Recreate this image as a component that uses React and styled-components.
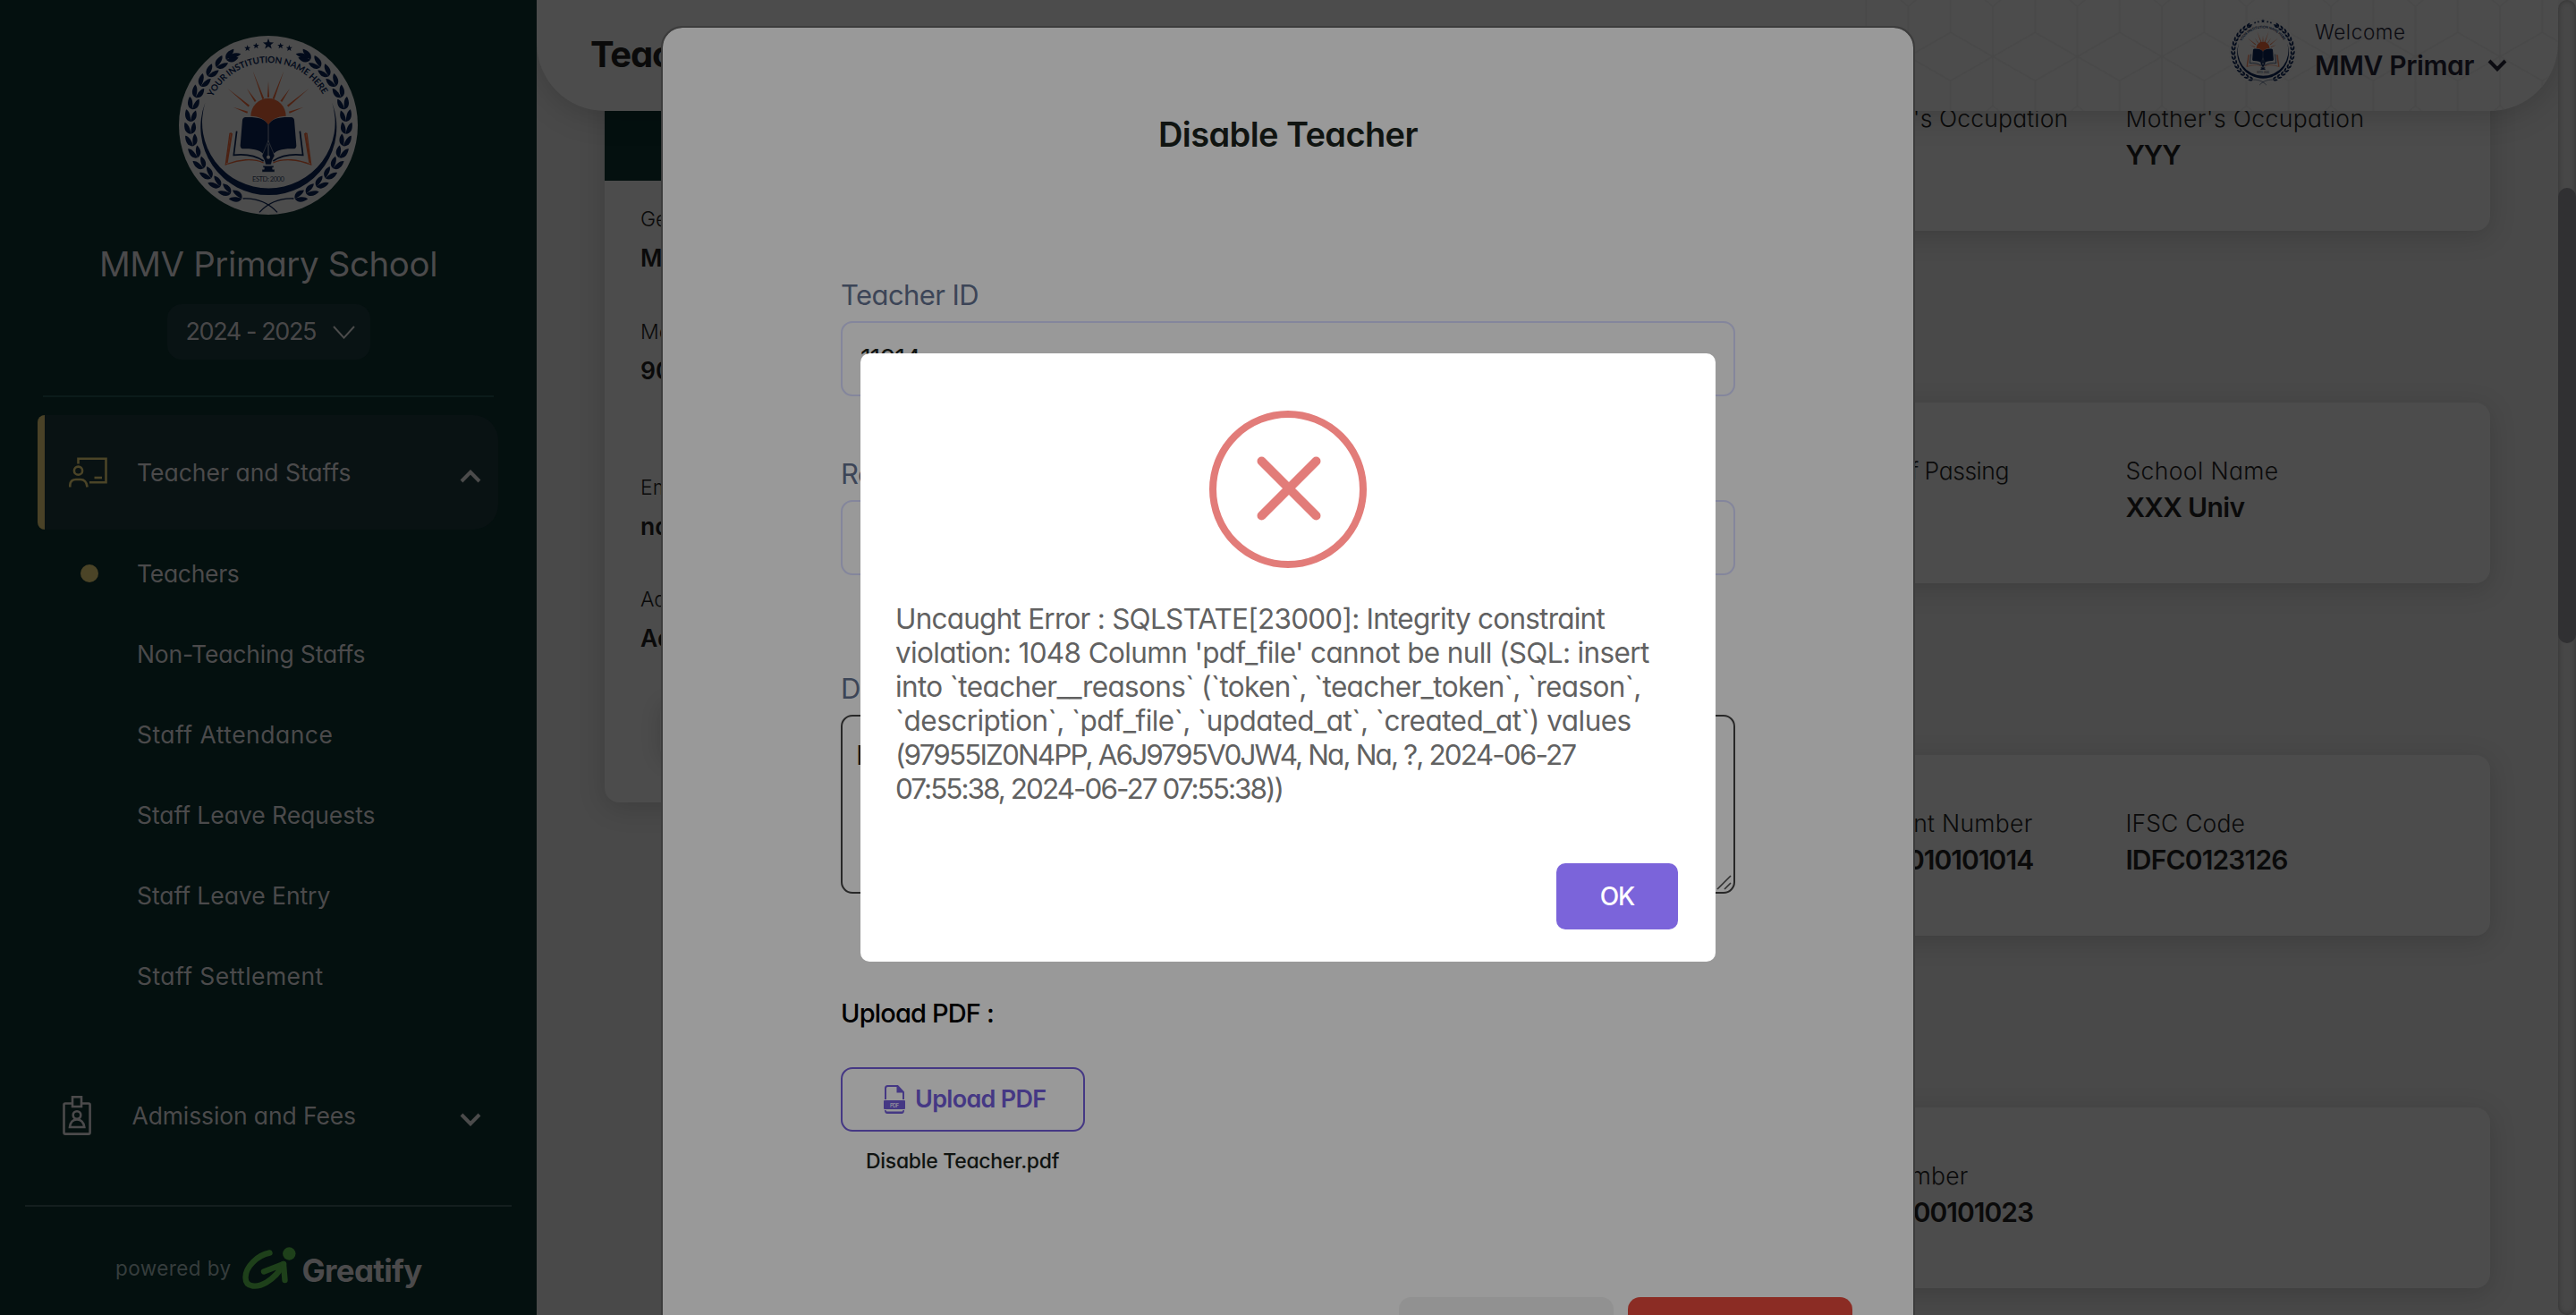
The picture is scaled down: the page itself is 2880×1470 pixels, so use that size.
import React from 'react';
import styled, { createGlobalStyle } from 'styled-components';

const GlobalStyle = createGlobalStyle`
  * { box-sizing: border-box; }
  html, body { margin: 0; padding: 0; background: #4a4a4a; overflow: hidden; }
  body {
    font-family: Inter, "Liberation Sans", sans-serif;
    font-feature-settings: 'cv11';
    color: #0a0a0a;
  }
`;

/* ---------- shell ---------- */

const Page = styled.div`
  position: relative;
  display: flex;
  width: 2880px;
  height: 1470px;
  overflow: hidden;
`;

const Label = styled.span`
  white-space: pre;
  font-size: ${(p) => p.$size}px;
  font-weight: ${(p) => p.$weight || 400};
  letter-spacing: ${(p) => p.$track || 0}px;
  line-height: ${(p) => p.$line || 36}px;
  color: ${(p) => p.$color || 'inherit'};
`;

/* ---------- sidebar ---------- */

const Sidebar = styled.aside`
  display: flex;
  flex-direction: column;
  flex: none;
  width: 600px;
  padding-top: 40px;
  background: #04100f;
  color: #4b4a4b;
`;

const Brand = styled.div`
  display: flex;
  flex-direction: column;
  align-items: center;
  gap: 31px;
`;

const YearSelect = styled.div`
  display: flex;
  align-items: center;
  justify-content: space-between;
  align-self: center;
  width: 227px;
  height: 62px;
  margin-top: 21px;
  padding: 0 17px 0 21px;
  border-radius: 16px;
  background: #091314;
`;

const Divider = styled.div`
  flex: none;
  height: 2px;
  margin: ${(p) => p.$margin};
  background: ${(p) => p.$color};
`;

const MenuItem = styled.div`
  display: flex;
  align-items: center;
  flex: none;
  height: ${(p) => (p.$active ? 128 : 100)}px;
  margin: ${(p) => (p.$active ? '20px 43px 0 42px' : '61px 43px 0 42px')};
  padding: ${(p) => (p.$active ? '0 19px 0 27px' : '0 19px 0 28px')};
  border-left: ${(p) => (p.$active ? '8px solid #4a4227' : '0')};
  border-radius: 8px 28px 28px 8px;
  background: ${(p) => (p.$active ? '#091213' : 'transparent')};
`;

const MenuText = styled(Label)`
  flex: 1;
  margin-left: ${(p) => p.$gap}px;
`;

const MenuCaret = styled.div`
  display: flex;
  padding-top: 9px;
`;

const SubMenu = styled.nav`
  display: flex;
  flex-direction: column;
  margin-top: 4px;
`;

const SubItem = styled.div`
  display: flex;
  align-items: center;
  gap: 43px;
  height: 90px;
  padding-left: 90px;
`;

const Dot = styled.i`
  width: 20px;
  height: 20px;
  border-radius: 50%;
  background: ${(p) => (p.$on ? '#4b4427' : 'transparent')};
`;

const Powered = styled.div`
  display: flex;
  align-items: center;
  height: 48px;
  margin: 45px 0 0 129px;
`;

const Wordmark = styled(Label)`
  margin: 4px 0 0 6px;
`;

const GreatifyMark = styled.svg`
  width: 61px;
  height: 48px;
  margin-left: 12px;
  overflow: visible;
`;

/* ---------- main ---------- */

const Main = styled.main`
  position: relative;
  flex: 1;
  height: 1470px;
  overflow: hidden;
  background: #494949;
`;

const TopBar = styled.header`
  position: absolute;
  inset: 0 0 auto 0;
  display: flex;
  justify-content: space-between;
  height: 124px;
  padding: 0 57px 0 60px;
  border-radius: 0 0 76px 76px;
  background: #4c4c4c;
  box-shadow: 0 6px 34px rgba(0, 0, 0, 0.17);
  overflow: hidden;
`;

const CubePattern = styled.svg`
  position: absolute;
  inset: 0 0 0 auto;
  width: 800px;
  height: 124px;
`;

const Account = styled.div`
  position: relative;
  display: flex;
  gap: 20px;
  padding-top: 20px;
`;

const AccountText = styled.div`
  display: flex;
  flex-direction: column;
  gap: 4px;
  color: #0b0b11;
`;

const AccountName = styled.div`
  display: flex;
  align-items: center;
  gap: 15px;
`;

const Content = styled.div`
  display: flex;
  justify-content: space-between;
  padding: 56px 76px 0;
`;

const Profile = styled.section`
  width: 674px;
  height: 841px;
  border-radius: 16px;
  background: #4c4c4c;
  box-shadow: 0 6px 30px rgba(0, 0, 0, 0.16);
`;

const ProfileBanner = styled.div`
  height: 146px;
  background: #04100f;
`;

const ProfileFields = styled.div`
  display: flex;
  flex-direction: column;
  padding: 29px 40px 0;
`;

const ProfileField = styled.div`
  display: flex;
  flex-direction: column;
  gap: 13px;
  margin-bottom: ${(p) => p.$after}px;
`;

const ProfileButton = styled.div`
  width: 560px;
  height: 66px;
  margin-left: 62px;
  border-radius: 14px;
  box-shadow: 0 2px 22px rgba(0, 0, 0, 0.15);
`;

const Sections = styled.div`
  display: flex;
  flex-direction: column;
  gap: 192px;
  width: 1364px;
`;

const DetailCard = styled.section`
  display: grid;
  grid-template-columns: 317.4px 1fr;
  height: 202px;
  padding: 60px 0 0 639px;
  border-radius: 16px;
  background: #4c4c4c;
  box-shadow: 0 6px 30px rgba(0, 0, 0, 0.16);
`;

const Detail = styled.div`
  display: flex;
  flex-direction: column;
  gap: 7px;
`;

const ScrollTrack = styled.div`
  flex: none;
  width: 20px;
  padding-top: 210px;
  border-radius: 10px;
  background: #474747;
  box-shadow: inset 0 0 6px rgba(0, 0, 0, 0.3);
`;

const ScrollThumb = styled.div`
  height: 509px;
  border-radius: 10px;
  background: #303032;
`;

/* ---------- dialog ---------- */

const Dialog = styled.section`
  position: absolute;
  top: 29px;
  left: 739px;
  display: flex;
  flex-direction: column;
  width: 1402px;
  height: 1600px;
  padding: 94px 199px 0;
  border: 2px solid #3c3c3c;
  border-radius: 24px;
  background: #999;
  background-clip: padding-box;
`;

const DialogTitle = styled(Label)`
  text-align: center;
`;

const Field = styled.div`
  display: flex;
  flex-direction: column;
  gap: 10px;
  margin-top: ${(p) => p.$top}px;
`;

const Input = styled.div`
  height: 84px;
  padding: 20px 20px;
  border: 2px solid #84869c;
  border-radius: 13px;
`;

const TextArea = styled.div`
  display: flex;
  justify-content: space-between;
  height: 200px;
  padding: 23px 2px 2px 15px;
  border: 2px solid #282828;
  border-radius: 13px;
`;

const Grip = styled.svg`
  align-self: flex-end;
  width: 17px;
  height: 17px;
`;

const UploadTitle = styled(Label)`
  margin-top: 116px;
`;

const UploadButton = styled.div`
  display: flex;
  align-items: center;
  gap: 11px;
  width: 273px;
  height: 72px;
  margin-top: 42px;
  padding-left: 46px;
  border: 2px solid #453884;
  border-radius: 13px;
`;

const FileName = styled(Label)`
  margin: 18px 0 0 28px;
`;

const DialogFooter = styled.div`
  display: flex;
  justify-content: flex-end;
  gap: 16px;
  margin: 137px -131px 0 0;
`;

const FooterButton = styled.div`
  width: ${(p) => p.$width}px;
  height: 84px;
  border-radius: 14px;
  background: ${(p) => p.$color};
`;

/* ---------- alert ---------- */

const Alert = styled.section`
  position: absolute;
  top: 395px;
  left: 962px;
  display: flex;
  flex-direction: column;
  width: 956px;
  height: 680px;
  padding: 64px 42px 36px 39px;
  border-radius: 10px;
  background: #fff;
`;

const ErrorIcon = styled.svg`
  flex: none;
  width: 176px;
  height: 176px;
  margin-left: 351px;
`;

const Message = styled.div`
  display: flex;
  flex-direction: column;
  margin-top: 38px;
  color: #616161;
`;

const OkButton = styled.div`
  display: flex;
  align-items: center;
  justify-content: center;
  align-self: flex-end;
  width: 136px;
  height: 74px;
  margin-top: auto;
  border-radius: 10px;
  background: #7b64da;
`;

/* ---------- drawings ---------- */

const Chevron = ({ width, height, stroke, color, up }) => (
  <svg width={width} height={height} viewBox={`0 0 ${width} ${height}`} fill="none">
    <path
      d={
        up
          ? `M${stroke / 2} ${height - stroke / 2} L${width / 2} ${stroke * 0.7} L${width - stroke / 2} ${height - stroke / 2}`
          : `M${stroke / 2} ${stroke / 2} L${width / 2} ${height - stroke * 0.7} L${width - stroke / 2} ${stroke / 2}`
      }
      stroke={color}
      strokeWidth={stroke}
    />
  </svg>
);

const NAVY = '#030b1b';
const RUST = '#4c2112';

const RAYS = [
  [278, 148, 313, 242], [382, 148, 347, 242], [330, 183, 330, 236],
  [258, 207, 287, 250], [402, 207, 373, 250], [194, 207, 265, 266],
  [466, 207, 395, 266], [212, 269, 260, 287], [448, 269, 400, 287],
];

const ray = ([tx, ty, bx, by]) => {
  const len = Math.hypot(bx - tx, by - ty);
  const nx = (-(by - ty) / len) * 3.2;
  const ny = ((bx - tx) / len) * 3.2;
  return `M${tx} ${ty}L${bx + nx} ${by + ny}L${bx - nx} ${by - ny}Z`;
};

const star = (cx, cy, r) => {
  let d = '';
  for (let i = 0; i < 10; i += 1) {
    const radius = i % 2 ? r * 0.42 : r;
    const a = (Math.PI / 5) * i - Math.PI / 2;
    d += `${i ? 'L' : 'M'}${cx + radius * Math.cos(a)} ${cy + radius * Math.sin(a)}`;
  }
  return `${d}Z`;
};

const LEAF_ANGLES = Array.from({ length: 15 }, (_, i) => 31 + i * 9.1);

const Wreath = () => (
  <g fill={NAVY}>
    {LEAF_ANGLES.map((a) => (
      <g key={a} transform={`rotate(${-a} 330 330)`}>
        <path d="M322 69 C324 50 344 46 362 51 C358 62 342 68 322 69Z" />
        <path d="M322 69 C326 88 344 91 361 84 C356 75 342 69 322 69Z" />
      </g>
    ))}
    <path d="M193 104 C205 88 222 84 238 91 C228 103 210 108 193 104Z" />
    <path d="M245 576 C290 574 330 590 360 622" fill="none" stroke={NAVY} strokeWidth="4" />
  </g>
);

const BookHalf = () => (
  <g>
    <path d="M207 357 L201 358 L187 462 C232 444 280 440 314 456" fill="none" stroke={RUST} strokeWidth="4" />
    <path d="M207 357 L191 456" fill="none" stroke={RUST} strokeWidth="6" />
    <path d="M224 350 L214 430 C250 426 285 430 314 450" fill="none" stroke={NAVY} strokeWidth="5" />
    <path d="M329 328 C318 308 296 302 254 303 Q244 304 243 313 L236 398 Q236 409 247 409 C282 408 306 414 318 432 C322 410 327 398 329 384Z" fill={NAVY} />
  </g>
);

const SchoolLogo = ({ size, id }) => (
  <svg width={size} height={size} viewBox="30 30 600 600">
    <defs>
      <path id={id} d="M142 237 A210 210 0 0 1 518 237" />
    </defs>
    <circle cx="330" cy="330" r="300" fill="#4c4c4c" />
    <Wreath />
    <g transform="translate(660 0) scale(-1 1)"><Wreath /></g>
    <path d={[star(330, 58, 19), star(289, 64, 11), star(371, 64, 11), star(260, 72, 11), star(400, 72, 11)].join('')} fill={NAVY} />
    <path d="M118 255 A228 228 0 1 0 544 255 A223 221 0 1 1 118 255Z" fill={NAVY} />
    <path d={RAYS.map(ray).join('')} fill={RUST} />
    <path d="M271 299 A59 59 0 0 1 389 299 C360 300 340 310 330 330 C320 310 300 300 271 299Z" fill={RUST} />
    <BookHalf />
    <g transform="translate(660 0) scale(-1 1)"><BookHalf /></g>
    <path d="M330 382 L309 432 Q318 446 321 462 H339 Q342 446 351 432Z M312 466 H348 V472 H344 V478 H351 V487 H309 V478 H316 V472 H312Z" fill={NAVY} stroke="#4c4c4c" strokeWidth="1.5" />
    <path d="M330 392 V434" stroke="#4c4c4c" strokeWidth="2.5" />
    <circle cx="330" cy="437" r="6" fill="#4c4c4c" />
    <text fontFamily="Lato, sans-serif" fontWeight="700" fontSize="30" fill={NAVY}>
      <textPath href={`#${id}`} textLength="452" startOffset="2">YOUR INSTITUTION NAME HERE</textPath>
    </text>
    <text x="330" y="518" textAnchor="middle" fontFamily="Lato, sans-serif" fontSize="23" fill="#10151f" textLength="108">ESTD: 2000</text>
  </svg>
);

const TeacherIcon = () => (
  <svg width="43" height="34" viewBox="0 0 43 34" fill="none" stroke="#4b4427" strokeWidth="2.6">
    <path d="M10.5 7.5 V1.8 H41.5 V28.2 H23" />
    <circle cx="10.5" cy="15.2" r="4.6" />
    <path d="M1.3 33.5 V31 Q1.8 25 8 25 H13 Q19.5 25 20.6 33.5" />
    <path d="M28.5 23 H37" />
  </svg>
);

const BadgeIcon = () => (
  <svg width="32" height="44" viewBox="0 0 32 44" fill="none" stroke="#4b4a4b" strokeWidth="2.6">
    <path d="M10.5 8.5 H3 Q1.5 8.5 1.5 10 V41 Q1.5 42.6 3 42.6 H29 Q30.6 42.6 30.6 41 V10 Q30.6 8.5 29 8.5 H22" />
    <path d="M11 1.3 H21 V12 H11Z" />
    <circle cx="16" cy="21.5" r="4.3" />
    <path d="M8 35 Q9 26.5 16 26.5 Q23 26.5 24.3 35Z" />
  </svg>
);

const PdfIcon = () => (
  <svg width="24" height="32" viewBox="0 0 24 32">
    <path d="M2 16 V3.5 Q2 1 4.5 1 H15.5 L22 8 V16" fill="none" stroke="#453884" strokeWidth="2" />
    <path d="M14.5 0.5 L22.5 8.5 H14.5Z" fill="#453884" />
    <rect x="0" y="17" width="24" height="10" rx="1" fill="#453884" />
    <path d="M1 28 Q1 32 4 32 H20 Q23 32 23 28 H21.5 Q21.5 29.6 20 29.6 H4 Q2.5 29.6 2.5 28Z" fill="#453884" />
    <text x="12" y="24.6" textAnchor="middle" fontFamily="Inter, sans-serif" fontWeight="600" fontSize="6" fill="#8d8a99" textLength="10">PDF</text>
  </svg>
);

const Cubes = () => (
  <CubePattern>
    <defs>
      <pattern id="cubes" width="94.5" height="164" patternUnits="userSpaceOnUse" x="73.5" y="-18.7">
        <path
          d="M0 26 V137 M94.5 26 V137 M47.25 -55 V55 M47.25 109 V219 M0 26 L47.25 -14 L94.5 26 M0 82 L47.25 55 L94.5 82 L47.25 109 Z M0 137 L47.25 178 L94.5 137"
          fill="none"
          stroke="#484848"
          strokeWidth="1.6"
        />
      </pattern>
    </defs>
    <rect width="800" height="124" fill="url(#cubes)" />
  </CubePattern>
);

/* ---------- data ---------- */

const SUB_ITEMS = [
  ['Teachers', -0.3, true],
  ['Non-Teaching Staffs', -0.17],
  ['Staff Attendance', 0.48],
  ['Staff Leave Requests', -0.05],
  ['Staff Leave Entry', -0.05],
  ['Staff Settlement', 0.44],
];

const PROFILE = [
  ['Gender', 'Male', 52.5],
  ['Mobile Number', '90', 101],
  ['Email', 'na', 52],
  ['Address', 'Ad', 55],
];

const DETAILS = [
  [
    { label: "Father's Occupation", value: '', labelTrack: 0.15 },
    { label: "Mother's Occupation", value: 'YYY', labelTrack: 0.4, track: -1 },
  ],
  [
    { label: 'Year of Passing', value: '', labelTrack: -0.45 },
    { label: 'School Name', value: 'XXX Univ', labelTrack: 0.4, track: -0.65 },
  ],
  [
    { label: 'Account Number', value: '11010010101014', labelTrack: 0.3, track: -0.95 },
    { label: 'IFSC Code', value: 'IDFC0123126', labelTrack: 0.15, track: -0.85 },
  ],
  [{ label: 'PF Number', value: '0100100101023', labelTrack: 0.25, track: -1 }],
];

const MESSAGE = [
  ['Uncaught Error : SQLSTATE[23000]: Integrity constraint', -0.77],
  ["violation: 1048 Column 'pdf_file' cannot be null (SQL: insert", -0.64],
  ['into `teacher__reasons` (`token`, `teacher_token`, `reason`,', -0.63],
  ['`description`, `pdf_file`, `updated_at`, `created_at`) values', -0.55],
  ['(97955IZ0N4PP, A6J9795V0JW4, Na, Na, ?, 2024-06-27', -1.88],
  ['07:55:38, 2024-06-27 07:55:38))', -1.98],
];

export default function App() {
  return (
    <>
      <GlobalStyle />
      <Page>
        <Sidebar>
          <Brand>
            <SchoolLogo size={200} id="ring-large" />
            <Label $size={38.5} $track={-0.42} $line={48}>MMV Primary School</Label>
          </Brand>
          <YearSelect>
            <Label $size={27} $track={-1.4} $color="#484748">2024 - 2025</Label>
            <Chevron width={25} height={15} stroke={2} color="#4b4b4b" />
          </YearSelect>
          <Divider $margin="40px 48px 0" $color="#0b1b1a" />
          <MenuItem $active>
            <TeacherIcon />
            <MenuText $gap={33} $size={26.5} $track={0}>Teacher and Staffs</MenuText>
            <MenuCaret><Chevron width={24} height={15} stroke={4} color="#4b4b4b" up /></MenuCaret>
          </MenuItem>
          <SubMenu>
            {SUB_ITEMS.map(([text, track, on]) => (
              <SubItem key={text}>
                <Dot $on={on} />
                <Label $size={26.5} $track={track}>{text}</Label>
              </SubItem>
            ))}
          </SubMenu>
          <MenuItem>
            <BadgeIcon />
            <MenuText $gap={45.5} $size={26.5} $track={-0.12}>Admission and Fees</MenuText>
            <MenuCaret><Chevron width={24} height={15} stroke={4} color="#4b4b4b" /></MenuCaret>
          </MenuItem>
          <Divider $margin="50px 28px 0" $color="#141e1e" />
          <Powered>
            <Label $size={22.5} $track={0.43} $color="#363d3d">powered by</Label>
            <GreatifyMark viewBox="0 0 61 48" fill="none" stroke="#1e401a" strokeLinecap="round" strokeLinejoin="round">
              <path d="M30.5 6.5 C17 9 3.5 22 3.5 34 C3.5 46 17 45.5 27 39.5 C35 34.5 42 27 46 19 L24 27.5" strokeWidth="6.4" />
              <path d="M46 19 L47.5 37" strokeWidth="6.4" />
              <circle cx="52.3" cy="7.5" r="7.2" fill="#1e401a" stroke="none" />
            </GreatifyMark>
            <Wordmark $size={35} $weight={700} $track={-0.74} $line={40}>Greatify</Wordmark>
          </Powered>
        </Sidebar>

        <Main>
          <Content>
            <Profile>
              <ProfileBanner />
              <ProfileFields>
                {PROFILE.map(([label, value, after]) => (
                  <ProfileField key={label} $after={after}>
                    <Label $size={23} $weight={300} $line={28}>{label}</Label>
                    <Label $size={26.5} $weight={600} $line={32}>{value}</Label>
                  </ProfileField>
                ))}
              </ProfileFields>
              <ProfileButton />
            </Profile>
            <Sections>
              {DETAILS.map((row) => (
                <DetailCard key={row[0].label}>
                  {row.map((item) => (
                    <Detail key={item.label}>
                      <Label $size={26.5} $weight={300} $track={item.labelTrack} $line={32}>{item.label}</Label>
                      <Label $size={30} $weight={600} $track={item.track} $line={36}>{item.value}</Label>
                    </Detail>
                  ))}
                </DetailCard>
              ))}
            </Sections>
          </Content>
          <TopBar>
            <Cubes />
            <Label $size={40} $weight={700} $track={-1.2} $line={122}>Teacher</Label>
            <Account>
              <SchoolLogo size={76} id="ring-small" />
              <AccountText>
                <Label $size={22.5} $weight={300} $track={0.6} $line={31}>Welcome</Label>
                <AccountName>
                  <Label $size={30} $weight={600} $track={-0.38}>MMV Primar</Label>
                  <Chevron width={22} height={14} stroke={4} color="#0b0b11" />
                </AccountName>
              </AccountText>
            </Account>
          </TopBar>
        </Main>

        <ScrollTrack>
          <ScrollThumb />
        </ScrollTrack>

        <Dialog>
          <DialogTitle $size={38} $weight={600} $track={-0.6} $line={50} $color="#101411">Disable Teacher</DialogTitle>
          <Field $top={136}>
            <Label $size={31} $track={-0.58} $line={38} $color="#3c4557">Teacher ID</Label>
            <Input><Label $size={29} $track={-1.2} $line={40} $color="#101411">11014</Label></Input>
          </Field>
          <Field $top={68}>
            <Label $size={31} $track={-0.58} $line={38} $color="#3c4557">Reason</Label>
            <Input />
          </Field>
          <Field $top={108}>
            <Label $size={31} $track={-0.58} $line={38} $color="#3c4557">Description</Label>
            <TextArea>
              <Label $size={30} $line={40} $color="#1a1a1a">Na</Label>
              <Grip viewBox="0 0 17 17" stroke="#303030" strokeWidth="1.6">
                <path d="M1 16 L16 1 M9 16 L16 9" />
              </Grip>
            </TextArea>
          </Field>
          <UploadTitle $size={29} $weight={500} $track={-0.83} $color="#000">Upload PDF :</UploadTitle>
          <UploadButton>
            <PdfIcon />
            <Label $size={27} $weight={600} $track={-0.7} $color="#453884">Upload PDF</Label>
          </UploadButton>
          <FileName $size={23} $weight={500} $track={-0.3} $line={30} $color="#101411">Disable Teacher.pdf</FileName>
          <DialogFooter>
            <FooterButton $width={240} $color="#919191" />
            <FooterButton $width={251} $color="#8b2c24" />
          </DialogFooter>
        </Dialog>

        <Alert>
          <ErrorIcon viewBox="0 0 176 176" fill="none" stroke="#e27c79">
            <circle cx="88" cy="88" r="84" strokeWidth="8" />
            <path d="M58.500 56.500 L119.500 117.500 M119.500 56.500 L58.500 117.500" strokeWidth="10" strokeLinecap="round" />
          </ErrorIcon>
          <Message>
            {MESSAGE.map(([text, track]) => (
              <Label key={text} $size={31.5} $track={track} $line={38.1}>{text}</Label>
            ))}
          </Message>
          <OkButton>
            <Label $size={28} $weight={500} $track={-1} $color="#fff">OK</Label>
          </OkButton>
        </Alert>
      </Page>
    </>
  );
}
